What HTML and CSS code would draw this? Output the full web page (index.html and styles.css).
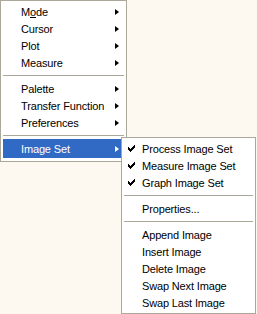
FILE: index.html
```html
<!DOCTYPE html>
<html>
<head>
<meta charset="utf-8">
<link rel="stylesheet" href="styles.css">
</head>
<body>
<div class="menu main">
  <div class="item"><span class="label">M<u>o</u>de</span><span class="arrow"></span></div>
  <div class="item"><span class="label">Cursor</span><span class="arrow"></span></div>
  <div class="item"><span class="label">Plot</span><span class="arrow"></span></div>
  <div class="item"><span class="label">Measure</span><span class="arrow"></span></div>
  <div class="sep"></div>
  <div class="item"><span class="label">Palette</span><span class="arrow"></span></div>
  <div class="item"><span class="label">Transfer Function</span><span class="arrow"></span></div>
  <div class="item"><span class="label">Preferences</span><span class="arrow"></span></div>
  <div class="sep"></div>
  <div class="item active"><span class="label">Image Set</span><span class="arrow"></span></div>
</div>
<div class="menu sub">
  <div class="item"><svg class="check" width="7" height="7" viewBox="0 0 7 7"><path d="M0 2h1v1h1v1h1v-1h1v-1h1v-1h1v-1h1v3h-1v1h-1v1h-1v1h-1v1h-1v-1h-1v-1h-1v-1h-1z" fill="#000"/></svg><span class="label">Process Image Set</span></div>
  <div class="item"><svg class="check" width="7" height="7" viewBox="0 0 7 7"><path d="M0 2h1v1h1v1h1v-1h1v-1h1v-1h1v-1h1v3h-1v1h-1v1h-1v1h-1v1h-1v-1h-1v-1h-1v-1h-1z" fill="#000"/></svg><span class="label">Measure Image Set</span></div>
  <div class="item"><svg class="check" width="7" height="7" viewBox="0 0 7 7"><path d="M0 2h1v1h1v1h1v-1h1v-1h1v-1h1v-1h1v3h-1v1h-1v1h-1v1h-1v1h-1v-1h-1v-1h-1v-1h-1z" fill="#000"/></svg><span class="label">Graph Image Set</span></div>
  <div class="sep"></div>
  <div class="item"><span class="label">Properties...</span></div>
  <div class="sep"></div>
  <div class="item"><span class="label">Append Image</span></div>
  <div class="item"><span class="label">Insert Image</span></div>
  <div class="item"><span class="label">Delete Image</span></div>
  <div class="item"><span class="label">Swap Next Image</span></div>
  <div class="item"><span class="label">Swap Last Image</span></div>
</div>
</body>
</html>
```
FILE: styles.css
```css
html, body {
  margin: 0;
  padding: 0;
  background: #fdf9f1;
  width: 257px;
  height: 314px;
  overflow: hidden;
}
body {
  font-family: "Liberation Sans", Arial, sans-serif;
  font-size: 11px;
  letter-spacing: -0.15px;
  color: #000;
}
.menu {
  background: #fff;
  border: 1px solid #aca899;
  padding: 2px;
  box-sizing: border-box;
}
.main {
  width: 127px;
  height: 162px;
}
.sub {
  position: absolute;
  left: 121px;
  top: 137px;
  width: 135px;
  height: 177px;
}
.item {
  position: relative;
  height: 17px;
  display: flex;
  align-items: center;
  padding-left: 18px;
  padding-right: 5px;
}
.label {
  flex: 1;
  white-space: nowrap;
}
.label u {
  text-decoration: underline;
}
.arrow {
  width: 0;
  height: 0;
  border-top: 3.5px solid transparent;
  border-bottom: 3.5px solid transparent;
  border-left: 4px solid #000;
}
.active {
  background: #316ac5;
  color: #fff;
  height: 19px;
  margin-top: -1px;
}
.active .arrow {
  border-left-color: #fff;
}
.check {
  position: absolute;
  left: 4px;
  top: 5px;
}
.sep {
  height: 9px;
  display: flex;
  align-items: center;
}
.sep::before {
  content: "";
  display: block;
  width: 100%;
  height: 1px;
  background: #aca899;
}
```
